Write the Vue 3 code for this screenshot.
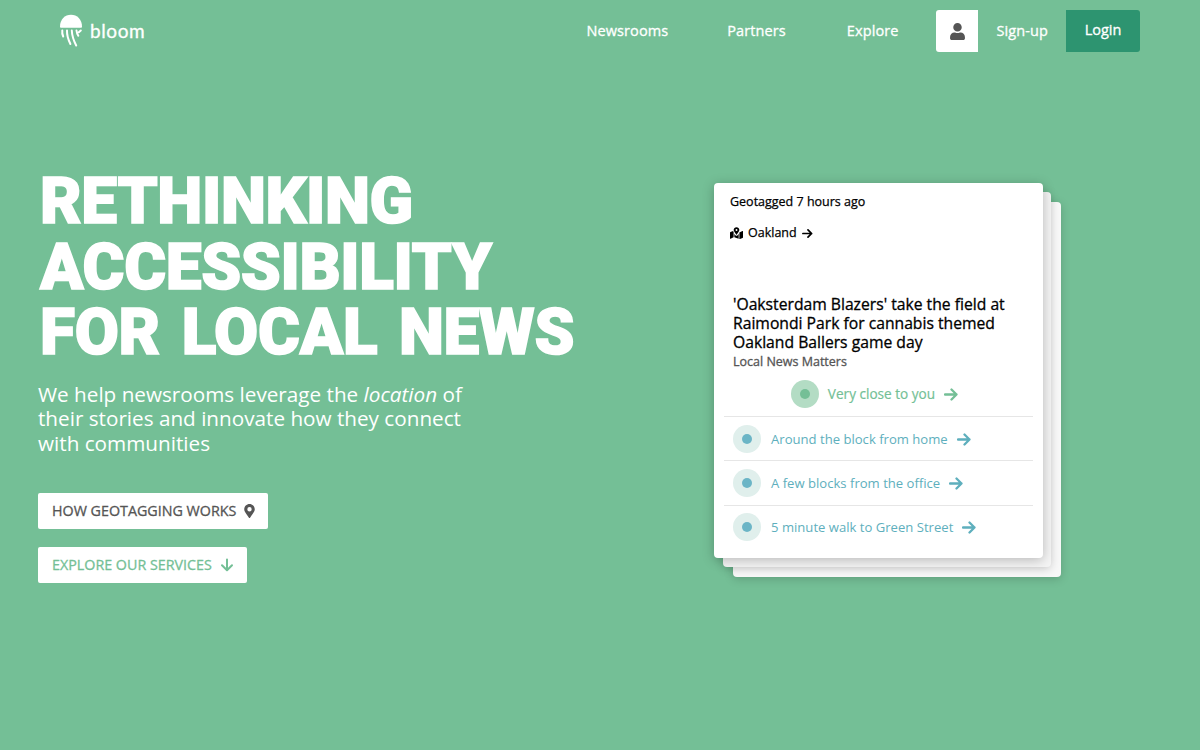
<template>
  <div class="page">
    <!-- Top navigation -->
    <header class="topbar">
      <div class="brand">
        <svg class="brand-mark" viewBox="0 0 24 33" width="24" height="33">
          <path d="M1 12.500C1 5.500 5.800 .8 12 .8s11 4.700 11 11.700c0 .8-.5 1.300-1.200 1.300H2.200C1.500 13.800 1 13.300 1 12.500z" fill="#fff" />
          <path d="M3.300 16.500c-.3 2 0 4 .9 6M8 16.500c-.2 4.500 1.200 9 3.400 13.500M12.800 16.500c.2 5 1.800 10 4.400 15M17.500 16.500c.2 2 .8 3.700 1.800 5.200M21.800 16.500l-2 1.800" fill="none" stroke="#fff" stroke-width="2" stroke-linecap="round" />
        </svg>
        <span class="brand-name">bloom</span>
      </div>
      <nav class="nav">
        <a class="nav-link nav-newsrooms">Newsrooms</a>
        <a class="nav-link nav-partners">Partners</a>
        <a class="nav-link nav-explore">Explore</a>
        <div class="user-box">
          <svg viewBox="0 0 448 512" width="15" height="17">
            <path d="M224 256a128 128 0 1 0 0-256 128 128 0 0 0 0 256zm90 32h-17a174 174 0 0 1-146 0h-17C60 288 0 348 0 422v42c0 26 22 48 48 48h352c26 0 48-22 48-48v-42c0-74-60-134-134-134z" fill="#555" />
          </svg>
        </div>
        <a class="nav-link nav-signup">Sign-up</a>
        <a class="login-btn">Login</a>
      </nav>
    </header>

    <main class="hero">
      <section class="hero-left">
        <h1 class="headline">
          <span class="line-one">Rethinking</span>
          <span class="line-two">Accessibility</span>
          <span class="line-three">for local news</span>
        </h1>
        <p class="lead">
          We help newsrooms leverage the <em>location</em> of their stories and innovate how they connect with communities
        </p>
        <div class="actions">
          <button class="action action-dark">
            How geotagging works
            <svg viewBox="0 0 384 512" width="11" height="14">
              <path d="M172 502C27 291 0 265 0 192 0 86 86 0 192 0s192 86 192 192c0 73-27 99-172 310a24 24 0 0 1-40 0zm20-230a80 80 0 1 0 0-160 80 80 0 0 0 0 160z" fill="#555" />
            </svg>
          </button>
          <button class="action action-green">
            Explore our services
            <svg viewBox="0 0 14 14" width="14" height="14">
              <path d="M7 1.500v10.500M2 7.300L7 12.300 12 7.300" fill="none" stroke="#74bf96" stroke-width="2" stroke-linecap="round" stroke-linejoin="round" />
            </svg>
          </button>
        </div>
      </section>

      <!-- Story card with stacked sheets behind -->
      <section class="stack">
        <div class="sheet sheet-back"></div>
        <div class="sheet sheet-mid"></div>
        <article class="card">
          <div class="geotag">Geotagged 7 hours ago</div>
          <div class="place">
            <svg viewBox="0 0 576 512" width="13" height="12">
              <path d="M288 0c-69 0-126 56-126 126 0 56 82 158 113 196a16 16 0 0 0 25 0c32-38 114-140 114-196C414 56 357 0 288 0zm0 168a42 42 0 1 1 0-84 42 42 0 0 1 0 84zM20 215A32 32 0 0 0 0 245v250c0 11 11 19 22 15l138-63V214a300 300 0 0 1-21-46zm268 164a48 48 0 0 1-37-17c-20-23-41-50-59-77v162l192 64V285c-18 27-39 54-59 77a48 48 0 0 1-37 17zm266-209l-138 63v299l140-56a32 32 0 0 0 20-30V185c0-11-11-19-22-15z" fill="#000" />
            </svg>
            <span>Oakland</span>
            <svg viewBox="0 0 12 12" width="11" height="11">
              <path d="M1 6h9.500M6.500 2l4 4-4 4" fill="none" stroke="#000" stroke-width="1.900" stroke-linecap="round" stroke-linejoin="round" />
            </svg>
          </div>
          <h2 class="story-title">'Oaksterdam Blazers' take the field at Raimondi Park for cannabis themed Oakland Ballers game day</h2>
          <div class="story-source">Local News Matters</div>
          <div class="near near-main">
            <span class="dot dot-green"><i></i></span>
            <span class="near-text">Very close to you</span>
            <svg class="near-arrow" viewBox="0 0 14 14" width="14" height="14">
              <path d="M1 7.500h11.500M7.500 2.500l5 5-5 5" fill="none" stroke="#74bf96" stroke-width="2.300" stroke-linecap="round" stroke-linejoin="round" />
            </svg>
          </div>
          <div v-for="row in rows" :key="row" class="near near-row">
            <span class="dot dot-blue"><i></i></span>
            <span class="near-text">{{ row }}</span>
            <svg class="near-arrow" viewBox="0 0 14 14" width="14" height="14">
              <path d="M1 7.500h11.500M7.500 2.500l5 5-5 5" fill="none" stroke="#5eafbd" stroke-width="2.300" stroke-linecap="round" stroke-linejoin="round" />
            </svg>
          </div>
        </article>
      </section>
    </main>
  </div>
</template>

<script setup>
const rows = [
  'Around the block from home',
  'A few blocks from the office',
  '5 minute walk to Green Street'
]
</script>

<style>
html, body {
  margin: 0;
  background: #74bf96;
}
</style>

<style scoped>
.page {
  height: 750px;
  overflow: hidden;
  background: #74bf96;
  font-family: "Open Sans", sans-serif;
  color: #fff;
}

.topbar {
  display: flex;
  justify-content: space-between;
  padding: 10px 60px 0 59px;
  height: 42px;
}

.brand {
  display: flex;
  align-items: flex-start;
  gap: 7px;
  padding-top: 4px;
}

.brand-name {
  font-family: "Lato", sans-serif;
  font-size: 19px;
  font-weight: 400;
  -webkit-text-stroke: 0.3px #fff;
  letter-spacing: 0.6px;
  line-height: 24px;
  margin-top: 5px;
}

.nav {
  display: flex;
  align-items: center;
  height: 42px;
}

.nav-link {
  font-size: 14.500px;
  letter-spacing: 0.1px;
  line-height: 40px;
  padding-bottom: 1px;
  -webkit-text-stroke: 0.3px #fff;
}

.nav-newsrooms { margin-right: 59px; }
.nav-partners { margin-right: 61px; }
.nav-explore { margin-right: 38px; }

.user-box {
  width: 42px;
  height: 42px;
  background: #fff;
  border-radius: 3px 0 0 3px;
  display: flex;
  align-items: center;
  justify-content: center;
}

.nav-signup {
  margin: 0 18px;
}

.login-btn {
  width: 74px;
  height: 42px;
  line-height: 40px;
  text-align: center;
  background: #2d9470;
  border-radius: 0 3px 3px 0;
  font-size: 14.500px;
  -webkit-text-stroke: 0.3px #fff;
}

.hero {
  display: flex;
  align-items: flex-start;
  padding: 117px 0 0 38px;
}

.hero-left {
  flex: 0 0 676px;
}

.headline {
  margin: 0;
  padding-left: 2px;
  font-family: "Roboto", sans-serif;
  font-size: 64px;
  font-weight: 900;
  line-height: 65.500px;
  text-transform: uppercase;
  -webkit-text-stroke: 1.500px #fff;
}

.headline span {
  display: block;
  white-space: nowrap;
}

.line-one { letter-spacing: -0.4px; }
.line-two { letter-spacing: -0.4px; }
.line-three { letter-spacing: -0.3px; word-spacing: 6px; }

.lead {
  margin: 16px 0 0;
  width: 440px;
  font-size: 20.700px;
  font-weight: 400;
  line-height: 24.500px;
}

.actions {
  display: flex;
  flex-direction: column;
  align-items: flex-start;
  gap: 18px;
  margin-top: 38px;
}

.action {
  display: flex;
  align-items: center;
  box-sizing: border-box;
  height: 36px;
  padding: 0 13px 1px 14px;
  gap: 8px;
  border: none;
  border-radius: 2px;
  background: #fff;
  font-family: "Open Sans", sans-serif;
  font-size: 14.300px;
  text-transform: uppercase;
}

.action-dark {
  color: #555;
  -webkit-text-stroke: 0.3px #555;
}

.action-green {
  color: #74bf96;
  -webkit-text-stroke: 0.3px #74bf96;
}

.stack {
  position: relative;
  width: 329px;
  margin-top: 14px;
}

.sheet {
  position: absolute;
  width: 328px;
  height: 375px;
  border-radius: 4px;
  box-shadow: 0 2px 10px rgba(0, 0, 0, 0.18);
}

.sheet-mid {
  left: 9px;
  top: 9px;
  background: #f4f4f4;
}

.sheet-back {
  left: 19px;
  top: 19px;
  background: #f8f8f8;
}

.card {
  position: relative;
  box-sizing: border-box;
  width: 329px;
  height: 375px;
  padding: 10px 10px 0 10px;
  background: #fff;
  border-radius: 4px;
  box-shadow: 0 2px 12px rgba(0, 0, 0, 0.25);
  color: #000;
}

.geotag {
  padding-left: 6px;
  font-size: 12.500px;
  line-height: 17px;
  -webkit-text-stroke: 0.25px #000;
}

.place {
  display: flex;
  align-items: center;
  gap: 5px;
  margin-top: 13px;
  padding-left: 6px;
  font-size: 12.500px;
  line-height: 20px;
  -webkit-text-stroke: 0.25px #000;
}

.story-title {
  margin: 52px 0 0;
  padding-left: 9px;
  width: 285px;
  font-size: 15.700px;
  font-weight: 400;
  line-height: 19px;
  -webkit-text-stroke: 0.3px #000;
}

.story-source {
  padding-left: 9px;
  font-size: 12.500px;
  line-height: 19px;
  color: #555;
  -webkit-text-stroke: 0.3px #555;
}

.near {
  display: flex;
  align-items: center;
  font-size: 13.100px;
  gap: 10px;
  box-sizing: border-box;
  height: 44.400px;
}

.near-main {
  justify-content: center;
  gap: 9px;
  height: 45px;
  font-size: 13.600px;
  color: #74bf96;
  padding-right: 8px;
  -webkit-text-stroke: 0.2px #74bf96;
}

.near-row {
  padding-left: 9px;
  border-top: 1px solid #e6e6e6;
  color: #5eafbd;
}

.near-row .near-arrow {
  margin-left: -1px;
}

.dot {
  width: 28px;
  height: 28px;
  border-radius: 50%;
  display: flex;
  align-items: center;
  justify-content: center;
}

.dot i {
  width: 10px;
  height: 10px;
  border-radius: 50%;
}

.dot-green { background: #b3dcc4; }
.dot-green i { background: #74bf96; }
.dot-blue { background: #e0efec; }
.dot-blue i { background: #6bb5c6; }
</style>
